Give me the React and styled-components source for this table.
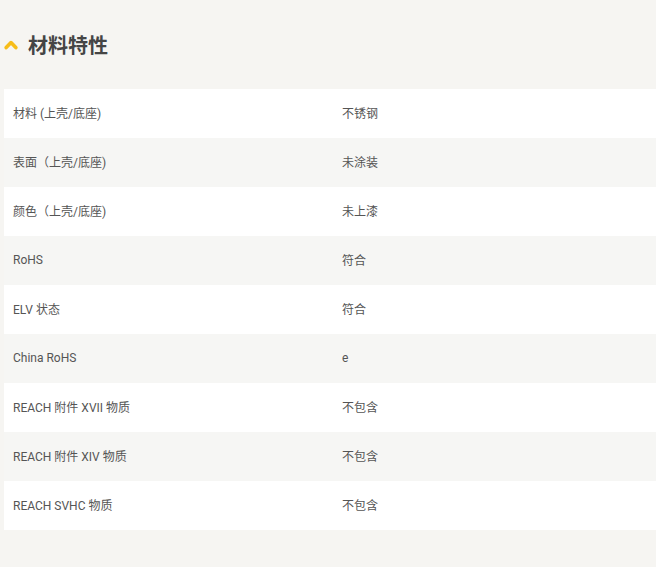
import React from "react";
import styled, { createGlobalStyle } from "styled-components";

const Global = createGlobalStyle`
  html, body { margin: 0; padding: 0; background: #f6f5f2; }
  body { font-family: Roboto, "Noto Sans CJK SC", sans-serif; }
`;

const Page = styled.div`
  width: 656px;
  min-height: 567px;
  background: #f6f5f2;
  padding-top: 26px;
  box-sizing: border-box;
`;

const Header = styled.div`
  display: flex;
  align-items: center;
  gap: 10px;
  height: 38px;
  padding-left: 4px;
`;

const Title = styled.h2`
  margin: 0;
  font-family: "Noto Sans CJK SC", sans-serif;
  font-size: 20px;
  font-weight: 700;
  color: #454545;
  line-height: 1;
`;

const Table = styled.div`
  margin: 25px 0 0 4px;
  display: grid;
  grid-template-columns: 329px 1fr;
`;

const Cell = styled.div`
  height: 49px;
  box-sizing: border-box;
  padding: 0 0 2px 9px;
  display: flex;
  align-items: center;
  background: ${(p) => (p.$alt ? "#f6f6f4" : "#ffffff")};
  font-family: Roboto, "Noto Sans CJK SC", sans-serif;
  font-size: 12px;
  color: #555555;
`;

const rows = [
  ["材料 (上壳/底座)", "不锈钢"],
  ["表面（上壳/底座)", "未涂装"],
  ["颜色（上壳/底座)", "未上漆"],
  ["RoHS", "符合"],
  ["ELV 状态", "符合"],
  ["China RoHS", "e"],
  ["REACH 附件 XVII 物质", "不包含"],
  ["REACH 附件 XIV 物质", "不包含"],
  ["REACH SVHC 物质", "不包含"],
];

const Chevron = () => (
  <svg width="14" height="11" viewBox="0 0 14 11" style={{ marginTop: "-1px" }}>
    <path d="M2.2 8.6 L7 3.6 L11.8 8.6" fill="none" stroke="#f7bd1a" strokeWidth="3.6" strokeLinecap="round" strokeLinejoin="round" />
  </svg>
);

export default function App() {
  return (
    <Page>
      <Global />
      <Header>
        <Chevron />
        <Title>材料特性</Title>
      </Header>
      <Table>
        {rows.map(([k, v], i) => (
          <React.Fragment key={i}>
            <Cell $alt={i % 2 === 1}>{k}</Cell>
            <Cell $alt={i % 2 === 1}>{v}</Cell>
          </React.Fragment>
        ))}
      </Table>
    </Page>
  );
}
